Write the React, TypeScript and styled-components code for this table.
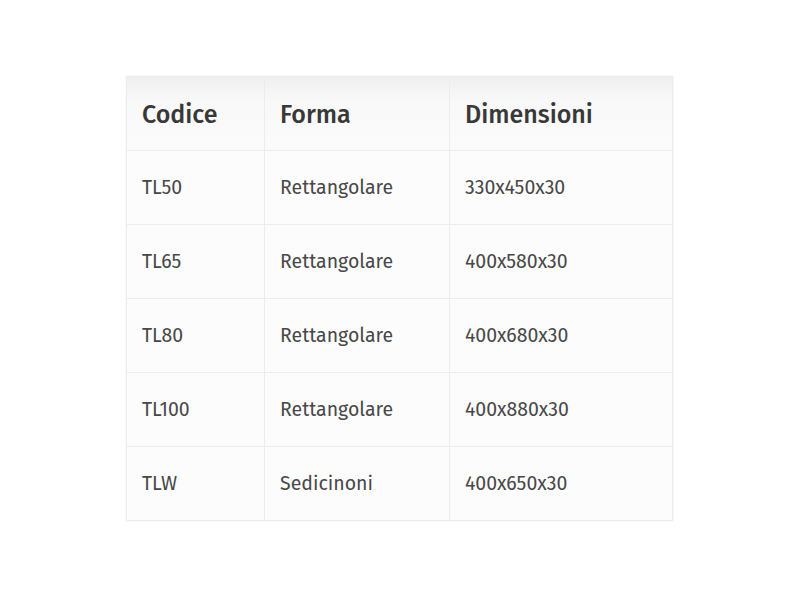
import React from "react";
import styled, { createGlobalStyle } from "styled-components";

const Global = createGlobalStyle`
  html, body { margin: 0; padding: 0; background: #ffffff; }
  body { font-family: "Fira Sans", "Open Sans", "Noto Sans", sans-serif; }
`;

const Page = styled.div`
  width: 800px;
  height: 600px;
  padding: 76px 0 0 126px;
  box-sizing: border-box;
`;

const Table = styled.table`
  border-collapse: collapse;
  width: 546px;
  table-layout: fixed;
  box-shadow: 0 0 2px rgba(0, 0, 0, 0.08);
`;

const Head = styled.thead`
  background: linear-gradient(#efefef, #f8f8f8 30%, #fbfbfb);
`;

const Th = styled.th<{ $w: number }>`
  width: ${(p) => p.$w}px;
  height: 74px;
  box-sizing: border-box;
  padding: 2px 15px 0;
  border: 1px solid #ececec;
  text-align: left;
  font-size: 25px;
  font-weight: 500;
  color: #383838;
`;

const Row = styled.tr`
  background: #fcfcfc;
`;

const Td = styled.td`
  height: 74px;
  box-sizing: border-box;
  padding: 0 15px;
  border: 1px solid #ececec;
  font-size: 19.5px;
  font-weight: 400;
  color: #484848;
`;

const rows = [
  ["TL50", "Rettangolare", "330x450x30"],
  ["TL65", "Rettangolare", "400x580x30"],
  ["TL80", "Rettangolare", "400x680x30"],
  ["TL100", "Rettangolare", "400x880x30"],
  ["TLW", "Sedicinoni", "400x650x30"],
];

export default function App() {
  return (
    <Page>
      <Global />
      <Table>
        <Head>
          <tr>
            <Th $w={138}>Codice</Th>
            <Th $w={185}>Forma</Th>
            <Th $w={223}>Dimensioni</Th>
          </tr>
        </Head>
        <tbody>
          {rows.map((r) => (
            <Row key={r[0]}>
              {r.map((c, i) => (
                <Td key={i}>{c}</Td>
              ))}
            </Row>
          ))}
        </tbody>
      </Table>
    </Page>
  );
}
